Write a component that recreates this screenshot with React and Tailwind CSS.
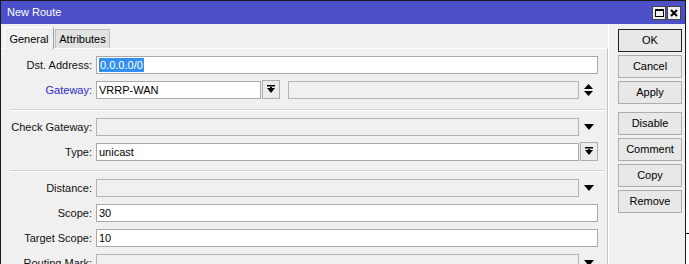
import React from "react";

const font = { fontFamily: '"Liberation Sans", Arial, sans-serif' };

function DownArrow() {
  return (
    <svg width="10" height="6" viewBox="0 0 10 6">
      <polygon points="0,0 10,0 5,6" fill="#000" />
    </svg>
  );
}

function BarArrow() {
  return (
    <svg width="8" height="9" viewBox="0 0 8 9">
      <rect x="0" y="0" width="8" height="1.5" fill="#000" />
      <polygon points="0,3 8,3 4,8" fill="#000" />
      <rect x="3" y="2" width="2" height="3" fill="#000" />
    </svg>
  );
}

function UpDown() {
  return (
    <svg width="9" height="12" viewBox="0 0 9 12">
      <polygon points="0,5 9,5 4.5,0" fill="#000" />
      <polygon points="0,7 9,7 4.5,12" fill="#000" />
    </svg>
  );
}

function Label({ children, blue }) {
  return (
    <div className={`w-[95px] shrink-0 pr-[4px] text-right leading-[18px] ${blue ? "text-[#2b2bc4]" : "text-[#111]"}`}>
      {children}
    </div>
  );
}

function Input({ w, gray, children }) {
  return (
    <div
      className={`${w} shrink-0 h-[18px] border pl-[2px] leading-[16px] text-black ${gray ? "bg-[#f0f0f0] border-[#b4b4b4]" : "bg-white border-[#a9a9a9]"}`}
    >
      {children}
    </div>
  );
}

function IconBtn({ children }) {
  return (
    <div className="ml-[1px] shrink-0 w-[18px] h-[19px] -mt-[1px] border border-[#adadad] bg-[#ececec] flex items-center justify-center">
      {children}
    </div>
  );
}

function Sep() {
  return <div className="ml-[9px] mr-[2px] border-t border-[#d3d3d3] border-b border-b-white" />;
}

function Btn({ children, def }) {
  return (
    <div
      className={`w-[64px] h-[23px] shrink-0 flex items-center justify-center text-[11px] text-black bg-[#e8e8e8] ${def ? "border border-[#222]" : "border border-[#adadad]"}`}
    >
      {children}
    </div>
  );
}

function Row({ children, className = "" }) {
  return <div className={`flex h-[18px] shrink-0 items-start ${className}`}>{children}</div>;
}

export default function App() {
  return (
    <div className="w-[689px] h-[264px] bg-white overflow-hidden relative text-[11px]" style={font}>
      <div className="w-[686px] h-[264px] bg-[#f0f0f0] border-t border-l border-r border-[#1a1a1a] flex flex-col overflow-hidden">
        {/* title bar */}
        <div className="h-[23px] shrink-0 bg-[#4b50c9] flex items-center justify-between pl-[6px] pr-[4px]">
          <span className="text-white text-[11px]">New Route</span>
          <div className="flex gap-[1px] mt-[1px]">
            <div className="w-[14px] h-[14px] bg-[#f0f0f0] border border-[#444] flex items-center justify-center">
              <div className="w-[9px] h-[8px] border border-black border-t-2" />
            </div>
            <div className="w-[14px] h-[14px] bg-[#f0f0f0] border border-[#444] flex items-center justify-center">
              <svg width="8" height="8" viewBox="0 0 8 8">
                <path d="M1 1 L7 7 M7 1 L1 7" stroke="#000" strokeWidth="2" />
              </svg>
            </div>
          </div>
        </div>
        {/* body */}
        <div className="flex flex-1 min-h-0">
          <div className="w-[607px] shrink-0 flex flex-col">
            {/* tabs */}
            <div className="h-[24px] shrink-0 flex items-end pl-[3px]">
              <div className="h-[22px] w-[50px] bg-[#f0f0f0] border-t border-l border-white border-r border-r-[#a0a0a0] flex items-start justify-center pt-[3px] text-black relative top-[1px]">
                General
              </div>
              <div className="h-[19px] w-[55px] ml-[1px] bg-[#e2e2e2] border-t border-l border-r border-[#bdbdbd] flex items-center justify-center text-black">
                Attributes
              </div>
            </div>
            {/* panel */}
            <div className="flex-1 border-t border-white border-r border-r-[#c4c4c4] pt-[7px] flex flex-col">
              <Row>
                <Label>Dst. Address:</Label>
                <Input w="w-[502px]">
                  <span className="bg-[#3390f0] text-white px-[1px] inline-block leading-[14px] mt-[1px]">0.0.0.0/0</span>
                </Input>
              </Row>
              <Row className="mt-[7px]">
                <Label blue>Gateway:</Label>
                <Input w="w-[165px]">VRRP-WAN</Input>
                <IconBtn><BarArrow /></IconBtn>
                <div className="ml-[8px] shrink-0">
                  <Input w="w-[291px]" gray />
                </div>
                <div className="w-[18px] h-[18px] flex items-center justify-center">
                  <UpDown />
                </div>
              </Row>
              <div className="mt-[10px] shrink-0"><Sep /></div>
              <Row className="mt-[7px]">
                <Label>Check Gateway:</Label>
                <Input w="w-[483px]" gray />
                <div className="w-[19px] h-[18px] flex items-center justify-center"><DownArrow /></div>
              </Row>
              <Row className="mt-[7px]">
                <Label>Type:</Label>
                <Input w="w-[483px]">unicast</Input>
                <IconBtn><BarArrow /></IconBtn>
              </Row>
              <div className="mt-[9px] shrink-0"><Sep /></div>
              <Row className="mt-[7px]">
                <Label>Distance:</Label>
                <Input w="w-[483px]" gray />
                <div className="w-[19px] h-[18px] flex items-center justify-center"><DownArrow /></div>
              </Row>
              <Row className="mt-[7px]">
                <Label>Scope:</Label>
                <Input w="w-[502px]">30</Input>
              </Row>
              <Row className="mt-[7px]">
                <Label>Target Scope:</Label>
                <Input w="w-[502px]">10</Input>
              </Row>
              <Row className="mt-[7px]">
                <Label>Routing Mark:</Label>
                <Input w="w-[483px]" gray />
                <div className="w-[19px] h-[18px] flex items-center justify-center"><DownArrow /></div>
              </Row>
            </div>
          </div>
          {/* buttons */}
          <div className="flex-1 border-l border-white pl-[9px] pt-[5px] flex flex-col">
            <div className="flex flex-col gap-[3px]">
              <Btn def>OK</Btn>
              <Btn>Cancel</Btn>
              <Btn>Apply</Btn>
            </div>
            <div className="flex flex-col gap-[3px] mt-[8px]">
              <Btn>Disable</Btn>
              <Btn>Comment</Btn>
              <Btn>Copy</Btn>
              <Btn>Remove</Btn>
            </div>
          </div>
        </div>
      </div>
      <div className="absolute left-[686px] top-[233px] w-[3px] h-[1px] bg-black" />
    </div>
  );
}
